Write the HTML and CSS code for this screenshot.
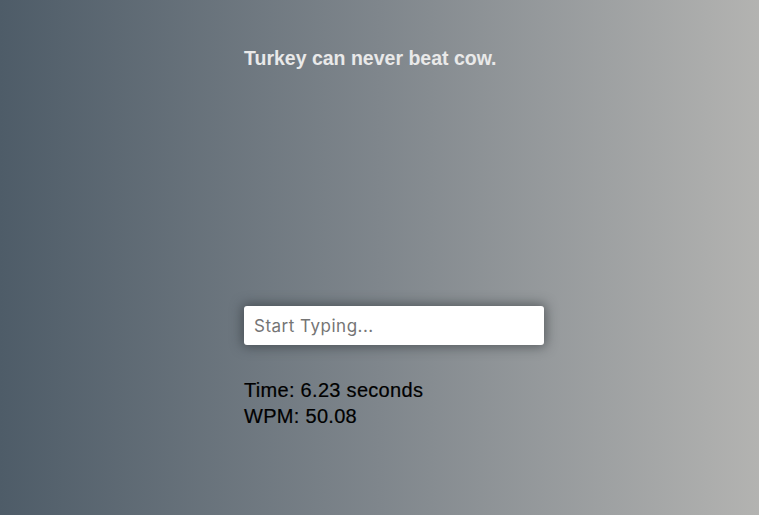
FILE: index.html
```html
<!DOCTYPE html>
<html>
<head>
<meta charset="utf-8">
<link rel="stylesheet" href="styles.css">
</head>
<body>
<main class="app">
  <h1 class="quote">Turkey can never beat cow.</h1>
  <input class="typing" type="text" placeholder="Start Typing...">
  <div class="results">
    <div class="line">Time: 6.23 seconds</div>
    <div class="line">WPM: 50.08</div>
  </div>
</main>
</body>
</html>
```
FILE: styles.css
```css
html, body {
  margin: 0;
  height: 100%;
}
body {
  background: linear-gradient(to right, #4e5c68 0%, #7f868c 50%, #b3b3b1 100%);
  font-family: "Liberation Sans", Arial, sans-serif;
}
.app {
  padding: 47px 0 0 244px;
  display: flex;
  flex-direction: column;
  align-items: flex-start;
}
.quote {
  margin: 0;
  font-size: 19.5px;
  line-height: 22px;
  font-weight: bold;
  color: #e9e9e9;
}
.typing {
  margin-top: 237px;
  width: 300px;
  height: 39px;
  box-sizing: border-box;
  border: none;
  border-radius: 3px;
  padding: 0 10px;
  font-family: Inter, "Liberation Sans", sans-serif;
  font-size: 17px;
  letter-spacing: 0.5px;
  background: #fff;
  box-shadow: 0 0 12px 2px rgba(40, 45, 50, 0.55);
  outline: none;
}
.typing::placeholder {
  color: #757575;
}
.results {
  margin-top: 32px;
  font-size: 20px;
  letter-spacing: 0.3px;
  line-height: 26px;
  color: #000;
  -webkit-text-stroke: 0.2px #000;
}
```
